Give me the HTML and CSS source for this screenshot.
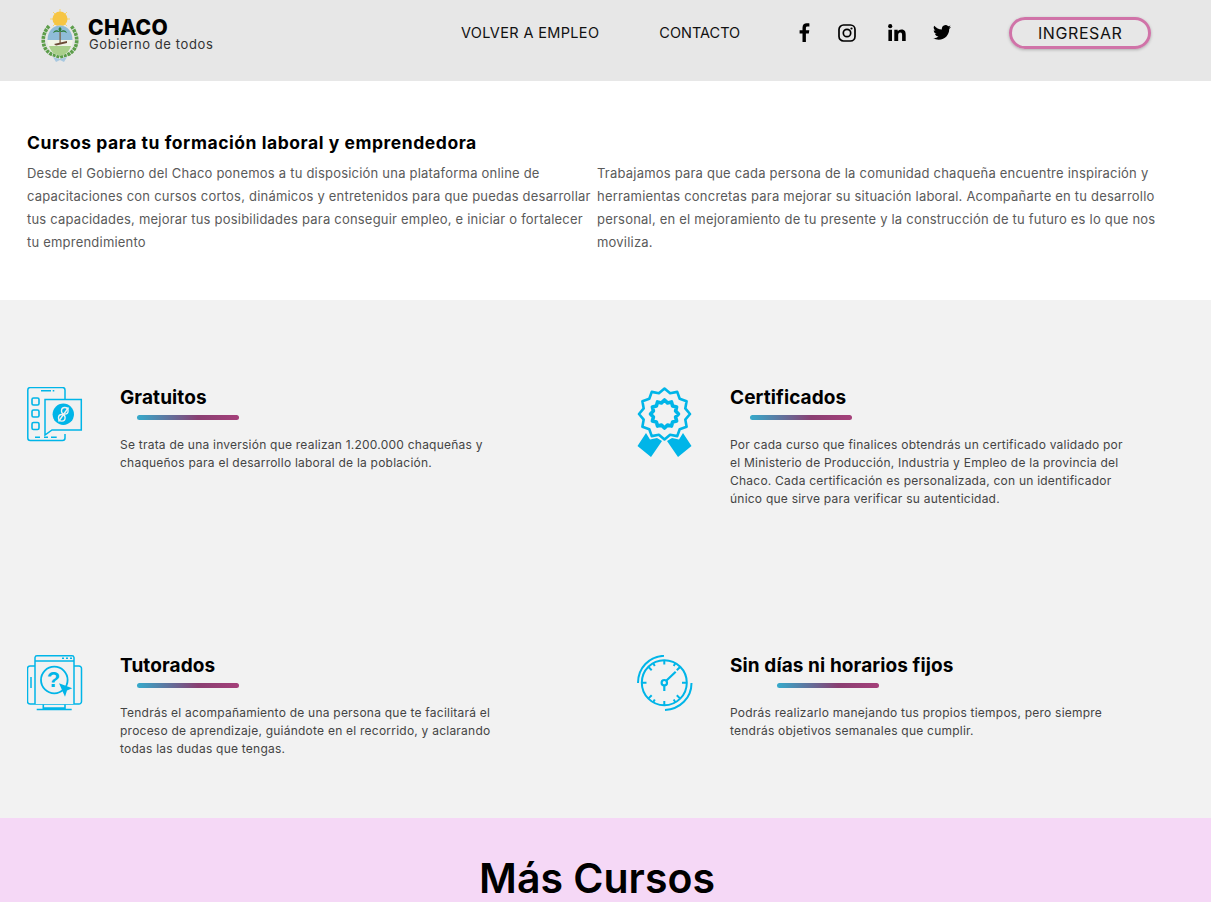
FILE: index.html
```html
<!DOCTYPE html>
<html lang="es">
<head>
<meta charset="utf-8">
<title>Chaco - Cursos</title>
<link rel="stylesheet" href="styles.css">
</head>
<body>
<header class="header">
  <a class="brand" href="#">
    <svg class="crest" width="38" height="58" viewBox="0 0 38 58">
      <g stroke="#f9d56a" stroke-width="1"><path d="M19 4V24M9 14H29M12 7L26 21M26 7L12 21"/></g>
      <circle cx="19" cy="14" r="7.500" fill="#f6c544"/>
      <path d="M8 21C0 30 0 43 10 49L19 52L28 49C38 43 38 30 30 21" fill="none" stroke="#5d9e4b" stroke-width="3.600" stroke-dasharray="3 .8"/>
      <ellipse cx="19" cy="35.500" rx="12.500" ry="15" fill="#f0f4e6"/>
      <path d="M6.500 35C6.500 26 12 20.500 19 20.500S31.500 26 31.500 35Z" fill="#8fbcd8"/>
      <path d="M8 41H30C28 47 24 50.500 19 50.500S10 47 8 41Z" fill="#a9cf8c"/>
      <path d="M18.500 38V27h1.200v11Z" fill="#7a5a3c"/>
      <path d="M19 27C16 24 13 25 12 28C15 26 17 27 19 27C21 27 23 26 26 28C25 25 22 24 19 27ZM19 27C17 25 17 23 19 22C21 23 21 25 19 27Z" fill="#2f7d3a"/>
      <path d="M13 39L26 36V38L15 40.500Z" fill="#6b4a36"/>
      <path d="M12 52L19 54L26 52L23 57L19 55L15 57Z" fill="#a8c8e0"/>
    </svg>
    <span class="brand-text">
      <strong class="brand-name">CHACO</strong>
      <span class="brand-sub">Gobierno de todos</span>
    </span>
  </a>
  <nav class="nav">
    <a class="nav-link" href="#">VOLVER A EMPLEO</a>
    <a class="nav-link nav-contacto" href="#">CONTACTO</a>
    <div class="social">
      <svg class="s-fb" width="12" height="19" viewBox="0 0 12 19"><path d="M3.500 19V10.500H.6V7.200h2.900V4.700C3.500 1.800 5.200.3 7.800.3c1.200 0 2.300.1 2.600.1v3H8.600C7.200 3.400 6.900 4.100 6.900 5.100v2.100h3.400l-.5 3.300H6.900V19Z" fill="#000"/></svg>
      <svg class="s-ig" width="18" height="18" viewBox="0 0 18 18"><rect x="1" y="1" width="16" height="16" rx="4.500" fill="none" stroke="#000" stroke-width="1.700"/><circle cx="9" cy="9" r="3.700" fill="none" stroke="#000" stroke-width="1.700"/><circle cx="13.500" cy="4.500" r="1.100" fill="#000"/></svg>
      <svg class="s-in" width="18" height="17" viewBox="0 0 18 17"><circle cx="2.200" cy="2.200" r="2.100" fill="#000"/><path d="M.4 5.700h3.600V17H.4ZM6.300 5.700h3.400v1.600c.6-1 1.900-1.900 3.700-1.900 3.600 0 4.300 2.300 4.300 5.400V17h-3.600v-5.500c0-1.300 0-3-1.800-3s-2.100 1.400-2.100 2.900V17H6.300Z" fill="#000"/></svg>
      <svg class="s-tw" width="18" height="15" viewBox="0 0 18 15"><path d="M18 1.800c-.7.300-1.400.5-2.100.6.800-.5 1.300-1.200 1.600-2-.7.400-1.500.7-2.300.9A3.700 3.700 0 0 0 8.900 4.600 10.500 10.500 0 0 1 1.300.7a3.700 3.700 0 0 0 1.100 4.900c-.6 0-1.200-.2-1.700-.4 0 1.800 1.300 3.300 3 3.700-.5.100-1.100.2-1.700.1.500 1.500 1.800 2.500 3.500 2.600A7.400 7.400 0 0 1 0 13.100 10.500 10.500 0 0 0 5.700 14.800c6.800 0 10.700-5.800 10.500-10.900.7-.5 1.300-1.200 1.800-2.100Z" fill="#000"/></svg>
    </div>
    <a class="login" href="#">INGRESAR</a>
  </nav>
</header>

<section class="intro">
  <h2 class="intro-title">Cursos para tu formación laboral y emprendedora</h2>
  <div class="intro-cols">
    <p class="intro-text">Desde el Gobierno del Chaco ponemos a tu disposición una plataforma online de<br>capacitaciones con cursos cortos, dinámicos y entretenidos para que puedas desarrollar<br>tus capacidades, mejorar tus posibilidades para conseguir empleo, e iniciar o fortalecer<br>tu emprendimiento</p>
    <p class="intro-text">Trabajamos para que cada persona de la comunidad chaqueña encuentre inspiración y<br>herramientas concretas para mejorar su situación laboral. Acompañarte en tu desarrollo<br>personal, en el mejoramiento de tu presente y la construcción de tu futuro es lo que nos<br>moviliza.</p>
  </div>
</section>

<section class="features">
  <article class="feature">
    <svg class="icon" width="56" height="56" viewBox="0 0 56 56" fill="none" stroke="#00b5e8" stroke-width="1.500">
      <path d="M38 12V3a2.500 2.500 0 0 0-2.500-2.500H3A2.500 2.500 0 0 0 .8 3V51a2.500 2.500 0 0 0 2.500 2.500H35.500A2.500 2.500 0 0 0 38 51V47"/>
      <path d="M14 3.700h10M25.700 3.700h1.600M8 50.300h5M17 50.300h4M24 50.300h5.700" stroke-width="1.600"/>
      <rect x="5" y="11" width="7" height="7" rx="1.500" stroke-width="1.600"/>
      <rect x="5" y="23" width="7" height="7" rx="1.500" stroke-width="1.600"/>
      <rect x="5" y="35.500" width="7" height="7" rx="1.500" stroke-width="1.600"/>
      <path d="M18 12.500H54.300V43H25L18 48Z" fill="#f1f1f1"/>
      <circle cx="36.300" cy="27.300" r="10.700" fill="#00b5e8" stroke="none"/>
      <g stroke="#f1f1f1" stroke-width="1.400"><circle cx="37.800" cy="23.800" r="3.300"/><circle cx="34.800" cy="30.800" r="3.300"/><path d="M41.500 20.500L31.500 34.500"/></g>
    </svg>
    <div class="feature-body">
      <h3 class="feature-title">Gratuitos</h3>
      <div class="bar"></div>
      <p class="feature-text">Se trata de una inversión que realizan 1.200.000 chaqueñas y<br>chaqueños para el desarrollo laboral de la población.</p>
    </div>
  </article>
  <article class="feature feature-cert">
    <svg class="icon" width="56" height="72" viewBox="0 0 56 72" fill="none" stroke="#00b5e8" stroke-linejoin="round">
      <polygon stroke-width="2.600" points="53,27 48.300,32.600 49.600,39.750 42.700,42.200 40.250,49.100 33.100,47.800 27.500,52.500 21.900,47.800 14.750,49.100 12.300,42.200 5.400,39.750 6.700,32.600 2,27 6.700,21.400 5.400,14.250 12.300,11.800 14.750,4.900 21.900,6.200 27.500,1.500 33.100,6.200 40.250,4.900 42.700,11.800 49.600,14.250 48.300,21.400"/>
      <polygon stroke-width="3.600" points="41.500,27 38.600,30 39.600,34 35.600,35.100 34.500,39.100 30.500,38.100 27.500,41 24.500,38.100 20.500,39.100 19.400,35.100 15.400,34 16.400,30 13.500,27 16.400,24 15.400,20 19.400,18.900 20.500,14.900 24.500,15.900 27.500,13 30.500,15.900 34.500,14.900 35.600,18.900 39.600,20 38.600,24"/>
      <path d="M9 46L13 52.500L20 51L25 54L14 70L0.500 59ZM46 46L42 52.500L35 51L30 54L41 70L54.500 59Z" fill="#00b5e8" stroke="none"/>
    </svg>
    <div class="feature-body">
      <h3 class="feature-title">Certificados</h3>
      <div class="bar"></div>
      <p class="feature-text">Por cada curso que finalices obtendrás un certificado validado por<br>el Ministerio de Producción, Industria y Empleo de la provincia del<br>Chaco. Cada certificación es personalizada, con un identificador<br>único que sirve para verificar su autenticidad.</p>
    </div>
  </article>
  <article class="feature">
    <svg class="icon" width="56" height="56" viewBox="0 0 56 56" fill="none" stroke="#00b5e8" stroke-width="1.500">
      <path d="M8 11H3a2.500 2.500 0 0 0-2.500 2.500V46.500A2.500 2.500 0 0 0 3 49H52A2.500 2.500 0 0 0 54.500 46.500V13.500A2.500 2.500 0 0 0 52 11H47"/>
      <path d="M8 49V2.500A2 2 0 0 1 10 .8H45A2 2 0 0 1 47 2.500V49" fill="#f1f1f1"/>
      <path d="M8 6H47M4 22v11"/>
      <path d="M35 3.300h2M39 3.300h2M43 3.300h2" stroke-width="1.500"/>
      <path d="M16.300 49.500v3.500H38V49.500M9.700 54.500H44.700" stroke-width="1.600"/>
      <circle cx="27.300" cy="25" r="13.300" stroke-width="1.800"/>
      <text class="q" x="26.500" y="32" text-anchor="middle">?</text>
      <path d="M32 28.300L45.300 33.300L40 35.500L38 41.700Z" fill="#00b5e8" stroke="none"/>
    </svg>
    <div class="feature-body">
      <h3 class="feature-title">Tutorados</h3>
      <div class="bar"></div>
      <p class="feature-text">Tendrás el acompañamiento de una persona que te facilitará el<br>proceso de aprendizaje, guiándote en el recorrido, y aclarando<br>todas las dudas que tengas.</p>
    </div>
  </article>
  <article class="feature feature-wide">
    <svg class="icon" width="56" height="56" viewBox="0 0 56 56" fill="none" stroke="#00b5e8" stroke-width="2">
      <circle cx="27.300" cy="27.700" r="22.500"/>
      <path d="M1 28C1 13 12 1.500 27 .8"/>
      <path d="M54.500 28C54.500 43 43 54.200 28 55"/>
      <path d="M27.300 5v4.500M27.300 46v4.500M5 27.700h4.500M45 27.700h4.500M11.500 12l3.200 3.200M43 12l-3.200 3.200M11.500 43.400l3.200-3.200M43 43.400l-3.200-3.200M16 8l1.800 3M38.500 8l-1.800 3M16 47.400l1.800-3M38.500 47.400l-1.800-3"/>
      <circle cx="27.300" cy="27.700" r="2.700" stroke-width="2.200"/>
      <path d="M29.500 25.500L38.700 16.700M27.300 30.500V36" stroke-width="2.200"/>
    </svg>
    <div class="feature-body">
      <h3 class="feature-title">Sin días ni horarios fijos</h3>
      <div class="bar"></div>
      <p class="feature-text">Podrás realizarlo manejando tus propios tiempos, pero siempre<br>tendrás objetivos semanales que cumplir.</p>
    </div>
  </article>
</section>

<section class="more">
  <h2 class="more-title">Más Cursos</h2>
</section>
</body>
</html>
```

FILE: styles.css
```css
* { box-sizing: border-box; }
html, body { margin: 0; padding: 0; overflow: hidden; height: 902px; }
body { font-family: Inter, "Open Sans", "Liberation Sans", sans-serif; color: #000; background: #fff; }
a { color: inherit; text-decoration: none; }
h2, h3, p { margin: 0; }

.header { height: 81px; background: #e7e7e7; display: flex; align-items: flex-start; padding-left: 41px; }
.brand { display: flex; align-items: flex-start; margin-top: 5px; flex: none; width: 172px; }
.crest { display: block; flex: none; }
.brand-text { display: flex; flex-direction: column; margin-left: 9px; margin-top: 12px; white-space: nowrap; }
.brand-name { font-size: 21px; line-height: 21px; font-weight: 800; letter-spacing: .35px; }
.brand-sub { font-size: 13px; line-height: 13px; color: #333; margin-left: 1px; letter-spacing: .6px; }

.nav { display: flex; align-items: center; margin-left: 248px; height: 65px; }
.nav-link { font-size: 14.500px; letter-spacing: .35px; color: #111; white-space: nowrap; }
.nav-contacto { margin-left: 60px; letter-spacing: 0; }
.social { display: flex; align-items: center; margin-left: 59px; }
.s-ig { margin-left: 27px; }
.s-in { margin-left: 32px; }
.s-tw { margin-left: 27px; }
.login {
  margin-left: 58px; width: 142px; height: 32px; border: 3px solid #d073a8; border-radius: 16px;
  display: flex; align-items: center; justify-content: center; font-size: 16px; letter-spacing: .6px; color: #111;
  box-shadow: 0 1px 3px rgba(0,0,0,.25);
}

.intro { height: 219px; background: #fff; padding: 51px 0 0 27px; }
.intro-title { font-size: 17.500px; line-height: 21px; font-weight: 700; letter-spacing: .55px; }
.intro-cols { display: grid; grid-template-columns: 570px 570px; margin-top: 9px; }
.intro-text { font-size: 13px; line-height: 23px; color: #5a5a5a; white-space: nowrap; letter-spacing: .21px; }

.features {
  height: 518px; background: #f2f2f2; padding: 85px 0 0 27px;
  display: grid; grid-template-columns: 610px 574px; grid-template-rows: 268px 165px; align-content: start;
}
.feature { display: flex; align-items: flex-start; }
.icon { flex: none; display: block; margin-top: 2px; }
.feature-body { margin-left: 37px; }
.feature-title { font-size: 19px; line-height: 24px; font-weight: 700; letter-spacing: .1px; padding-top: 1px; height: 25px; }
.bar { width: 102px; height: 5px; margin: 5px 0 0 17px; border-radius: 3px; background: linear-gradient(90deg, #35aacb 0%, #8a3f72 60%, #a5407a 100%); }
.feature-cert .bar { margin-left: 20px; }
.feature-wide .bar { margin-left: 47px; }
.feature-text { font-size: 12px; line-height: 18px; color: #444; margin-top: 16px; white-space: nowrap; letter-spacing: .23px; }
.q { font-family: "Liberation Sans", sans-serif; font-weight: 700; font-size: 22px; fill: #00b5e8; stroke: none; }

.more { height: 84px; background: #f5d8f6; padding: 36px 17px 0 0; text-align: center; }
.more-title { font-size: 41px; line-height: 48px; font-weight: 600; color: #000; }
```
